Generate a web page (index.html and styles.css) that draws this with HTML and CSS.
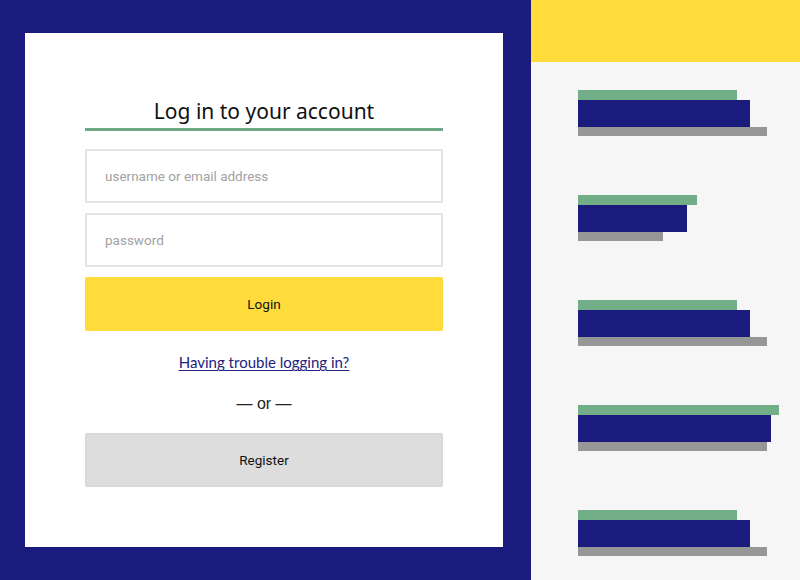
FILE: index.html
```html
<!DOCTYPE html>
<html lang="en">
<head>
<meta charset="utf-8">
<title>Log in</title>
<link rel="stylesheet" href="styles.css">
</head>
<body>
<div class="page">
  <section class="login-side">
    <div class="card">
      <h1 class="title">Log in to your account</h1>
      <form class="form" onsubmit="return false">
        <input class="field" type="text" placeholder="username or email address">
        <input class="field" type="password" placeholder="password">
        <button class="btn btn-login" type="submit">Login</button>
      </form>
      <a class="trouble" href="#">Having trouble logging in?</a>
      <div class="or">— or —</div>
      <button class="btn btn-register" type="button">Register</button>
    </div>
  </section>
  <aside class="chart-side">
    <div class="chart-head"></div>
    <div class="chart">
      <div class="group">
        <div class="bar bar-green" style="width:159px"></div>
        <div class="bar bar-navy" style="width:172px"></div>
        <div class="bar bar-gray" style="width:189px"></div>
      </div>
      <div class="group">
        <div class="bar bar-green" style="width:119px"></div>
        <div class="bar bar-navy" style="width:109px"></div>
        <div class="bar bar-gray" style="width:85px"></div>
      </div>
      <div class="group">
        <div class="bar bar-green" style="width:159px"></div>
        <div class="bar bar-navy" style="width:172px"></div>
        <div class="bar bar-gray" style="width:189px"></div>
      </div>
      <div class="group">
        <div class="bar bar-green" style="width:201px"></div>
        <div class="bar bar-navy" style="width:193px"></div>
        <div class="bar bar-gray" style="width:189px"></div>
      </div>
      <div class="group">
        <div class="bar bar-green" style="width:159px"></div>
        <div class="bar bar-navy" style="width:172px"></div>
        <div class="bar bar-gray" style="width:189px"></div>
      </div>
    </div>
  </aside>
</div>
</body>
</html>
```

FILE: styles.css
```css
* { box-sizing: border-box; }

html, body {
  margin: 0;
  padding: 0;
}

body {
  width: 800px;
  height: 580px;
  overflow: hidden;
  font-family: Roboto, "Liberation Sans", Arial, sans-serif;
  background: #f6f6f7;
}

.page {
  display: flex;
  width: 800px;
  height: 580px;
}

.login-side {
  width: 531px;
  flex: none;
  background: #1a1b7c;
  padding: 33px 28px 33px 25px;
}

.card {
  background: #ffffff;
  height: 514px;
  padding: 63px 60px 0 60px;
  display: flex;
  flex-direction: column;
  align-items: stretch;
}

.title {
  margin: 0;
  font-family: "Noto Sans", "Open Sans", sans-serif;
  font-weight: 400;
  font-size: 21px;
  line-height: 30px;
  color: #111111;
  text-align: center;
  padding-bottom: 2px;
  border-bottom: 3px solid #6faa86;
}

.form {
  margin: 18px 0 0 0;
  display: flex;
  flex-direction: column;
  gap: 10px;
}

.field {
  height: 54px;
  width: 100%;
  border: 2px solid #e3e3e3;
  border-radius: 2px;
  padding: 0 18px;
  font-family: Roboto, "Liberation Sans", Arial, sans-serif;
  font-size: 13.5px;
  color: #333;
  background: #fff;
  outline: none;
}

.field::placeholder {
  color: #a2a2a2;
}

.btn {
  height: 54px;
  width: 100%;
  border-radius: 2px;
  font-family: Roboto, "Liberation Sans", Arial, sans-serif;
  font-size: 13.5px;
  color: #111;
  cursor: pointer;
}

.btn-login {
  background: #ffdc3c;
  border: none;
}

.trouble {
  margin-top: 21px;
  align-self: center;
  font-family: Lato, "Open Sans", sans-serif;
  font-size: 15px;
  line-height: 20px;
  color: #22237e;
  text-decoration: underline;
  text-underline-offset: 2px;
  text-decoration-thickness: 1px;
}

.or {
  margin-top: 22px;
  text-align: center;
  font-family: "Liberation Sans", Arial, sans-serif;
  font-size: 16px;
  line-height: 20px;
  color: #222;
}

.btn-register {
  margin-top: 19px;
  background: #dddddd;
  border: 2px solid #d8d8d8;
}

.chart-side {
  flex: 1;
  display: flex;
  flex-direction: column;
  background: #f6f6f7;
}

.chart-head {
  height: 62px;
  background: #ffdc3c;
}

.chart {
  padding: 28px 0 0 47px;
  display: flex;
  flex-direction: column;
  gap: 59px;
}

.group {
  display: flex;
  flex-direction: column;
}

.bar { flex: none; }

.bar-green {
  height: 10px;
  background: #72ae88;
}

.bar-navy {
  height: 27px;
  background: #1a1b7c;
}

.bar-gray {
  height: 9px;
  background: #979797;
}
```
